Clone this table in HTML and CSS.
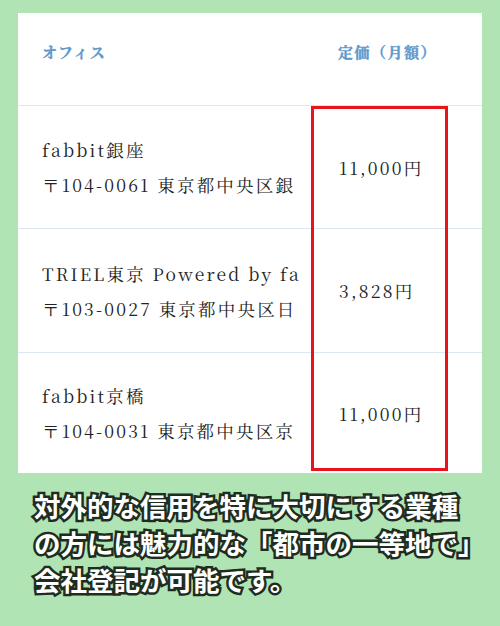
FILE: index.html
```html
<!DOCTYPE html>
<html lang="ja">
<head>
<meta charset="utf-8">
<link rel="stylesheet" href="styles.css">
</head>
<body>
<div class="card">
  <div class="row head"><div class="cell office">オフィス</div><div class="cell price">定価（月額）</div></div>
  <div class="row r1"><div class="cell office"><div class="ln">fabbit銀座</div><div class="ln">〒104-0061 東京都中央区銀</div></div><div class="cell price">11,000円</div></div>
  <div class="row r2"><div class="cell office"><div class="ln">TRIEL東京 Powered by fa</div><div class="ln">〒103-0027 東京都中央区日</div></div><div class="cell price">3,828円</div></div>
  <div class="row r3"><div class="cell office"><div class="ln">fabbit京橋</div><div class="ln">〒104-0031 東京都中央区京</div></div><div class="cell price">11,000円</div></div>
  <div class="hl"></div>
</div>
<p class="caption">対外的な信用を特に大切にする業種<br>の方には魅力的な「都市の一等地で」<br>会社登記が可能です。</p>
</body>
</html>
```
FILE: styles.css
```css
html, body { margin: 0; padding: 0; }
body {
  width: 500px;
  height: 626px;
  background: #b1e4b5;
  overflow: hidden;
  font-family: "Noto Serif CJK JP", "Liberation Serif", serif;
}
.card {
  position: relative;
  margin: 13px 0 0 18px;
  width: 464px;
  height: 460px;
  background: #fff;
}
.row {
  display: grid;
  grid-template-columns: 293px 171px;
  align-items: center;
  box-sizing: border-box;
  border-bottom: 1px solid #dde7f1;
}
.head {
  height: 93px;
  padding-bottom: 15px;
  font-size: 15px;
  letter-spacing: 1.5px;
  color: #5d97cb;
  font-weight: bold;
  -webkit-text-stroke: 0.35px #5d97cb;
}
.r1 { height: 123px; }
.r2 { height: 124px; }
.r3 { height: 120px; border-bottom: none; }
.r1, .r2, .r3 {
  color: #222;
  font-size: 17.5px;
  letter-spacing: 2.2px;
}
.office {
  padding: 0 6px 0 24px;
  overflow: hidden;
  white-space: nowrap;
}
.ln { line-height: 35px; }
.price { padding-left: 28px; white-space: nowrap; }
.head .price { padding-left: 27px; }
.hl {
  position: absolute;
  left: 293px;
  top: 93px;
  width: 131px;
  height: 359px;
  border: 3px solid #e8131b;
}
.caption {
  margin: 14px 0 0 34px;
  font-family: "Noto Sans CJK JP", sans-serif;
  font-weight: bold;
  font-size: 26.5px;
  line-height: 37px;
  color: #fff;
  -webkit-text-stroke: 5px #1f2d1f;
  paint-order: stroke fill;
}
```
